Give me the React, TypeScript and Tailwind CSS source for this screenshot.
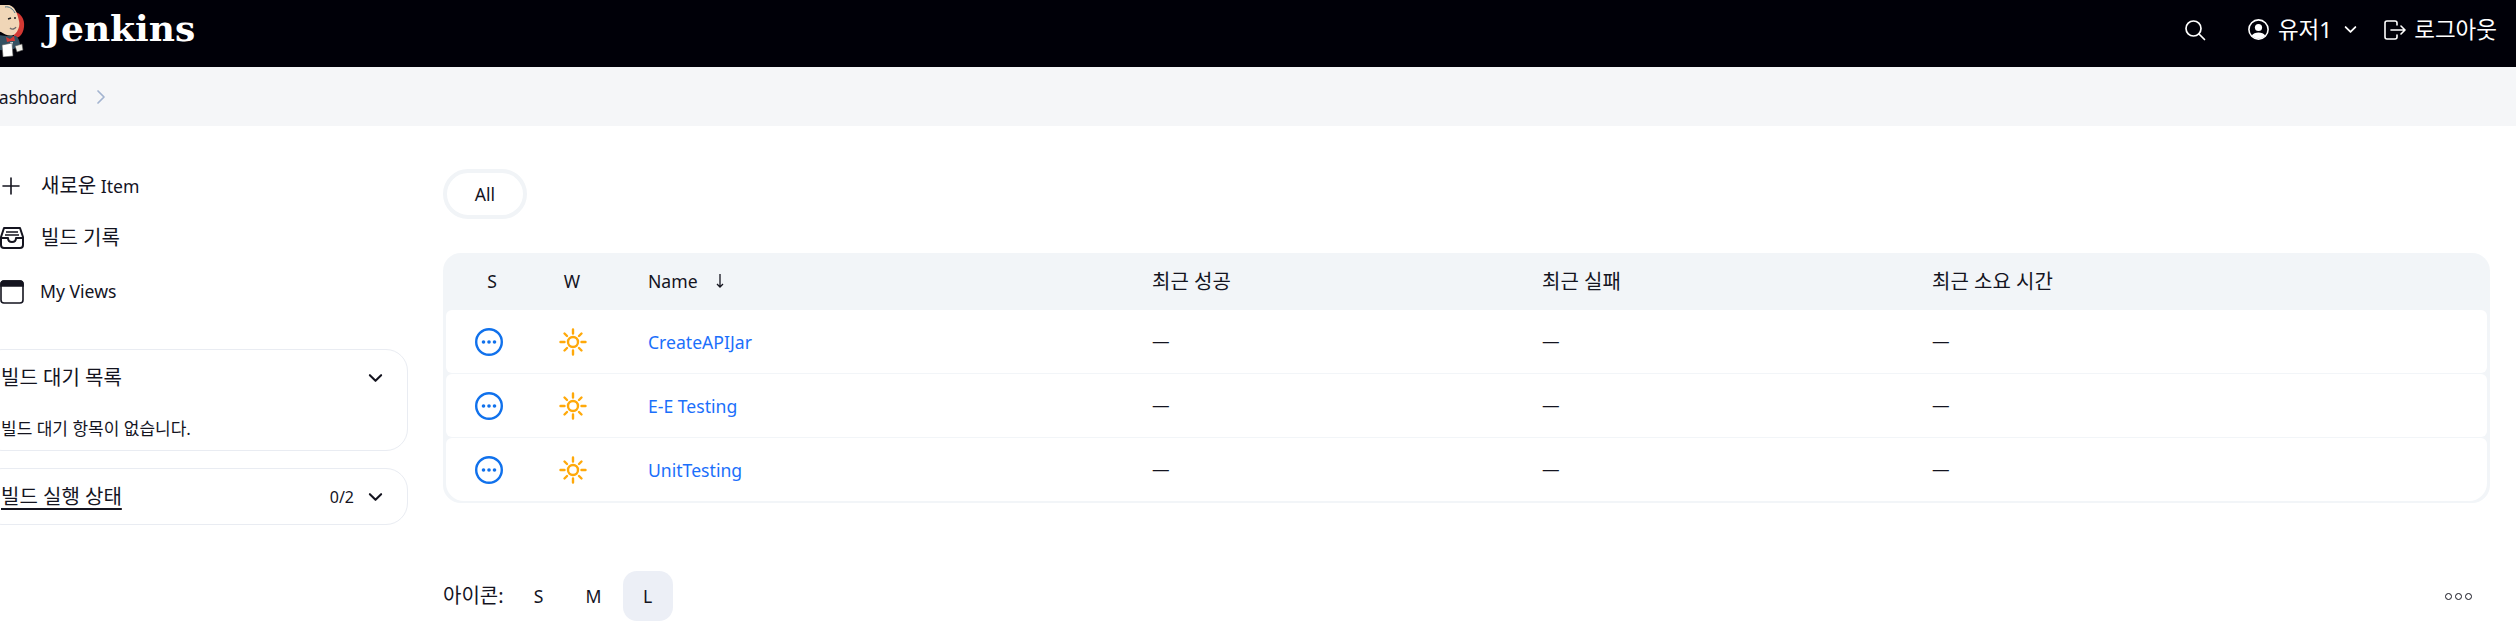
import React from "react"

const jobs = ["CreateAPIJar", "E-E Testing", "UnitTesting"]

const Logo = () => (
  <svg width="26" height="52" viewBox="0 0 26 52" className="mt-[2px] shrink-0">
    <path d="M14 6 C22 8 26 14 25 22 C24 30 20 33 15 33 Z" fill="#d33833" />
    <path d="M0 30 L8 31 L17 31 C21 34 21 40 21 41 L10 46 L0 45 Z" fill="#335061" />
    <path d="M-4 2 C2 -2 10 -2 15 3 C18 7 19 12 20 16 C21 20 20 25 16 29 C12 32 6 30 2 27 L-4 25 Z" fill="#f0d6b7" />
    <path d="M6 2 C10 1 14 4 16 8" stroke="#49728b" strokeWidth="1" fill="none" />
    <path d="M9 14 L12 13 M15 13 L17 13" stroke="#222" strokeWidth="1.4" />
    <path d="M11 23 C13 25 16 24 17 22" stroke="#6d6b6d" strokeWidth="1.4" fill="none" />
    <path d="M7 32 L11 34 L15 31 L16 36 L12 36 L8 37 Z" fill="#d33833" />
    <path d="M11 37 L14 37 L13 41 Z" fill="#dce6ea" />
    <path d="M3 40 L13 38 L14 51 L4 52 Z" fill="#fff" stroke="#555" strokeWidth="0.6" />
    <path d="M16 41 L23 39 L24 45 L18 47 Z" fill="#f0efe9" stroke="#555" strokeWidth="0.6" />
  </svg>
)

const Chevron = ({ className }: { className: string }) => (
  <svg viewBox="0 0 16 10" className={className} fill="none" stroke="currentColor" strokeWidth="2.2" strokeLinecap="round" strokeLinejoin="round">
    <path d="M2 2 L8 8 L14 2" />
  </svg>
)

const StatusIcon = () => (
  <svg width="28" height="28" viewBox="0 0 28 28" fill="none">
    <circle cx="14" cy="14" r="12.8" stroke="#1071ec" strokeWidth="2.4" />
    <circle cx="8.5" cy="14" r="1.8" fill="#1071ec" />
    <circle cx="14" cy="14" r="1.8" fill="#1071ec" />
    <circle cx="19.5" cy="14" r="1.8" fill="#1071ec" />
  </svg>
)

const SunIcon = () => (
  <svg width="28" height="28" viewBox="0 0 28 28" fill="none" stroke="#ffa90a" strokeWidth="2.4" strokeLinecap="round">
    <circle cx="14" cy="14" r="5" />
    <path d="M14 1.5 V5.5 M14 22.5 V26.5 M1.5 14 H5.5 M22.5 14 H26.5 M5.5 5.5 L8 8 M20 20 L22.5 22.5 M5.5 22.5 L8 20 M20 8 L22.5 5.5" />
  </svg>
)

const JobRow = ({ name, last }: { name: string; last: boolean }) => (
  <div className={"flex h-[63px] items-center bg-white " + (last ? "rounded-t-[6px] rounded-b-[18px]" : "rounded-[6px]")}>
    <div className="flex w-[84px] justify-center pl-[1px]"><StatusIcon /></div>
    <div className="flex w-[84px] justify-center pl-[1px]"><SunIcon /></div>
    <a className="w-[538px] pl-[34px] pt-[1px] text-[#1b6ffb]">{name}</a>
    <div className="w-[390px]">—</div>
    <div className="w-[390px]">—</div>
    <div>—</div>
  </div>
)

export default function App() {
  return (
    <div className="h-[640px] w-full overflow-hidden bg-white font-['Noto_Sans','Noto_Sans_CJK_KR',sans-serif] text-[17.6px] text-[#14141f]">
      <header className="flex h-[67px] items-center bg-[#000008] pb-[8px] pr-[19px] text-white">
        <div className="ml-[-1px] flex items-center">
          <Logo />
          <span className="mb-[4px] ml-[19px] font-['DejaVu_Serif',serif] text-[36px] font-bold leading-none">Jenkins</span>
        </div>
        <svg width="22" height="22" viewBox="0 0 22 22" fill="none" stroke="white" strokeWidth="1.7" strokeLinecap="round" className="ml-auto">
          <circle cx="9.5" cy="9.5" r="7.5" />
          <path d="M15 15 L20.5 20.5" />
        </svg>
        <svg width="21" height="21" viewBox="0 0 21 21" className="ml-[42px]" fill="none">
          <circle cx="10.5" cy="10.5" r="9.6" stroke="white" strokeWidth="1.6" />
          <circle cx="10.5" cy="8.5" r="3.6" fill="white" />
          <path d="M3.8 16.5 C6 12.5 15 12.5 17.2 16.5 C15 20.5 6 20.5 3.8 16.5 Z" fill="white" />
        </svg>
        <span className="ml-[9px] text-[22.5px]">유저1</span>
        <Chevron className="ml-[12px] h-[9px] w-[13px]" />
        <svg width="22" height="20" viewBox="0 0 22 20" fill="none" stroke="white" strokeWidth="1.6" strokeLinecap="round" strokeLinejoin="round" className="ml-[27px]">
          <path d="M13 5 V3 C13 1.8 12.2 1 11 1 H3 C1.8 1 1 1.8 1 3 V17 C1 18.2 1.8 19 3 19 H11 C12.2 19 13 18.2 13 17 V15" />
          <path d="M7 10 H21 M17 6 L21 10 L17 14" />
        </svg>
        <span className="ml-[8px] text-[22.5px]">로그아웃</span>
      </header>

      <nav className="flex h-[59px] items-center bg-[#f5f6f8]">
        <span className="ml-[-14px] pt-[1px]">Dashboard</span>
        <svg width="10" height="16" viewBox="0 0 10 16" fill="none" stroke="#a3b4d0" strokeWidth="1.7" strokeLinecap="round" strokeLinejoin="round" className="ml-[19px]">
          <path d="M2 2 L8 8 L2 14" />
        </svg>
      </nav>

      <div className="flex">
        <aside className="ml-[-20px] w-[428px] shrink-0">
          <div className="mt-[40px] flex h-[40px] items-center pl-[22px]">
            <svg width="18" height="18" viewBox="0 0 18 18" stroke="#14141f" strokeWidth="1.6" strokeLinecap="round"><path d="M9 1 V17 M1 9 H17" /></svg>
            <span className="ml-[21px]"><span className="text-[20px]">새로운</span> Item</span>
          </div>
          <div className="mt-[12px] flex h-[40px] items-center pl-[20px]">
            <svg width="24" height="22" viewBox="0 0 24 22" fill="none" stroke="#14141f" strokeWidth="2" strokeLinejoin="round">
              <path d="M4 1 H20 L23 10 V18 C23 20 22 21 20 21 H4 C2 21 1 20 1 18 V10 Z" />
              <path d="M1 11 H8 C8 14 10 15 12 15 C14 15 16 14 16 11 H23" />
              <path d="M6 5 H18 M5 8 H19" strokeWidth="1.5" />
            </svg>
            <span className="ml-[17px] text-[20px]">빌드 기록</span>
          </div>
          <div className="mt-[13px] flex h-[41px] items-center pl-[20px]">
            <svg width="24" height="24" viewBox="0 0 24 24" fill="none" stroke="#14141f" strokeWidth="1.6">
              <rect x="1" y="1" width="22" height="22" rx="3" />
              <path d="M1 4 C1 2 2 1 4 1 H20 C22 1 23 2 23 4 V6 H1 Z" fill="#14141f" />
            </svg>
            <span className="ml-[16px]">My Views</span>
          </div>

          <section className="mt-[37px] h-[102px] rounded-[22px] border border-[#e9ecf2] pl-[20px] pr-[24px]">
            <div className="mt-[15px] flex h-[26px] items-center justify-between">
              <span className="text-[20px]">빌드 대기 목록</span>
              <Chevron className="h-[10px] w-[15px]" />
            </div>
            <p className="mt-[25px] text-[17px]">빌드 대기 항목이 없습니다.</p>
          </section>
          <section className="mt-[17px] flex h-[57px] items-center rounded-[22px] border border-[#e9ecf2] pl-[20px] pr-[24px]">
            <span className="text-[20px] underline underline-offset-4">빌드 실행 상태</span>
            <span className="ml-auto mr-[14px] text-[16px]">0/2</span>
            <Chevron className="h-[10px] w-[15px]" />
          </section>
        </aside>

        <main className="ml-[35px] mr-[26px] min-w-0 flex-1">
          <div className="mt-[43px] flex h-[50px] w-[84px] items-center justify-center rounded-[25px] border-4 border-[#f1f4f7]">All</div>

          <div className="mt-[34px] rounded-[18px] bg-[#f2f5f8] px-[3px] pb-[2px]">
            <div className="flex h-[57px] items-center">
              <div className="w-[84px] pl-[8px] text-center">S</div>
              <div className="w-[84px] text-center">W</div>
              <div className="flex w-[538px] items-center pl-[34px]">
                Name
                <svg width="8" height="14" viewBox="0 0 8 14" fill="none" stroke="#14141f" strokeWidth="1.3" className="ml-[18px]"><path d="M4 0 V13 M1 10 L4 13 L7 10" /></svg>
              </div>
              <div className="w-[390px] text-[20px]">최근 성공</div>
              <div className="w-[390px] text-[20px]">최근 실패</div>
              <div className="text-[20px]">최근 소요 시간</div>
            </div>
            <div className="flex flex-col gap-[1px]">
              {jobs.map((job, i) => (
                <JobRow key={job} name={job} last={i === jobs.length - 1} />
              ))}
            </div>
          </div>

          <div className="mt-[68px] flex h-[50px] items-center">
            <span className="text-[20px]">아이콘:</span>
            <div className="ml-[10px] flex w-[50px] justify-center">S</div>
            <div className="ml-[5px] flex w-[50px] justify-center">M</div>
            <div className="ml-[4px] flex h-[50px] w-[50px] items-center justify-center rounded-[14px] bg-[#eceff6]">L</div>
            <div className="ml-auto mr-[18px] flex gap-[3px]">
              <span className="h-[7px] w-[7px] rounded-full border border-[#14141f]" />
              <span className="h-[7px] w-[7px] rounded-full border border-[#14141f]" />
              <span className="h-[7px] w-[7px] rounded-full border border-[#14141f]" />
            </div>
          </div>
        </main>
      </div>
    </div>
  )
}
